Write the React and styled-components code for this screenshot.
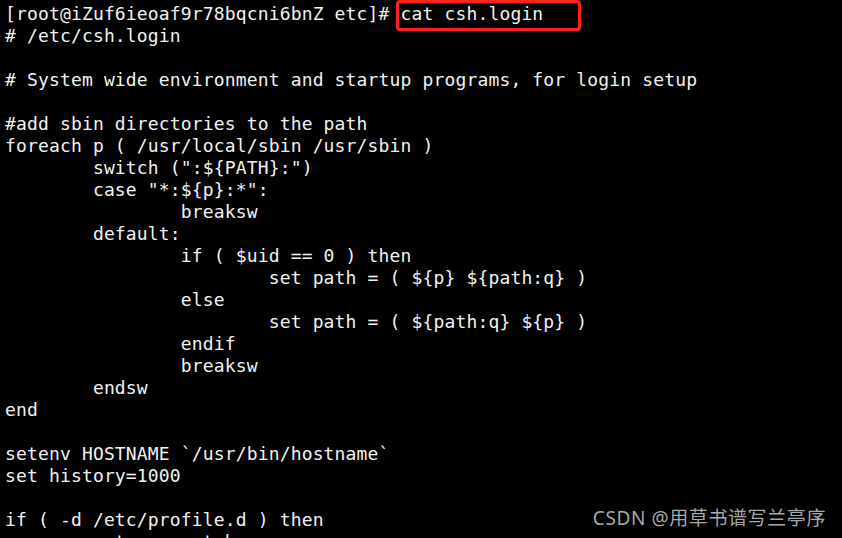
import styled, { createGlobalStyle } from "styled-components";

const GlobalStyle = createGlobalStyle`
  html, body {
    margin: 0;
    padding: 0;
    background: #000;
    overflow: hidden;
  }
`;

const Screen = styled.div`
  position: relative;
  width: 842px;
  height: 538px;
  background: #000;
  overflow: hidden;
`;

const Terminal = styled.pre`
  margin: 0;
  padding: 3px 0 0 5px;
  font-family: "DejaVu Sans Mono", "Liberation Mono", monospace;
  font-size: 18px;
  letter-spacing: 0.15px;
  line-height: 22px;
  color: #f2f2f2;
  white-space: pre;
`;

const Line = styled.div`
  height: 22px;
`;

const Marked = styled.span`
  position: relative;
  &::after {
    content: "";
    position: absolute;
    left: -5px;
    right: -38px;
    top: -3px;
    height: 31px;
    border: 3px solid #ff2020;
    border-radius: 4px;
    box-sizing: border-box;
  }
`;

const Watermark = styled.div`
  position: absolute;
  right: 16px;
  bottom: 7px;
  font-family: "Noto Sans", "Noto Sans CJK SC", sans-serif;
  font-size: 19px;
  color: #a8a8a8;
  letter-spacing: 0.6px;
`;

const lines = [
  "# /etc/csh.login",
  "",
  "# System wide environment and startup programs, for login setup",
  "",
  "#add sbin directories to the path",
  "foreach p ( /usr/local/sbin /usr/sbin )",
  "        switch (\":${PATH}:\")",
  "        case \"*:${p}:*\":",
  "                breaksw",
  "        default:",
  "                if ( $uid == 0 ) then",
  "                        set path = ( ${p} ${path:q} )",
  "                else",
  "                        set path = ( ${path:q} ${p} )",
  "                endif",
  "                breaksw",
  "        endsw",
  "end",
  "",
  "setenv HOSTNAME `/usr/bin/hostname`",
  "set history=1000",
  "",
  "if ( -d /etc/profile.d ) then",
  "        set nonomatch",
];

export default function App() {
  return (
    <>
      <GlobalStyle />
      <Screen>
        <Terminal>
          <Line>
            [root@iZuf6ieoaf9r78bqcni6bnZ etc]# <Marked>cat csh.login</Marked>
          </Line>
          {lines.map((l, i) => (
            <Line key={i}>{l}</Line>
          ))}
        </Terminal>
        <Watermark>CSDN @用草书谱写兰亭序</Watermark>
      </Screen>
    </>
  );
}
